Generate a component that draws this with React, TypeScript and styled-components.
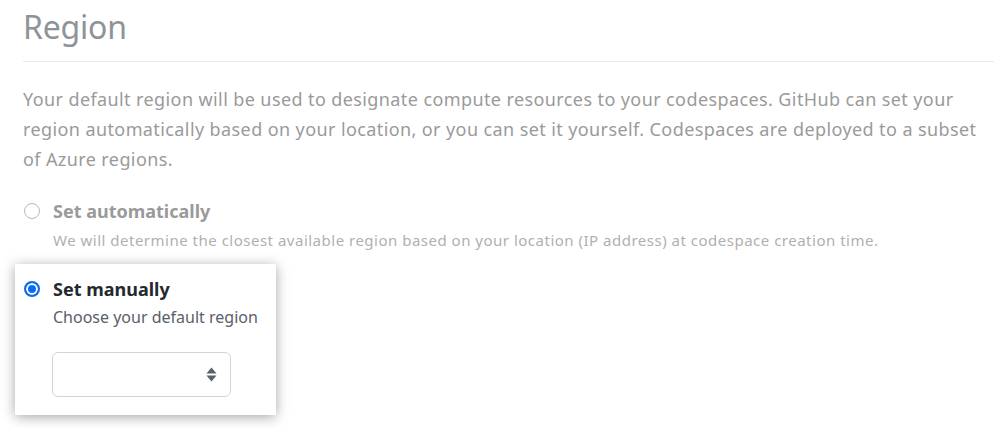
import React from "react";
import styled, { createGlobalStyle } from "styled-components";

const Global = createGlobalStyle`
  html, body { margin: 0; padding: 0; background: #fff; }
  body { font-family: "Noto Sans", "Open Sans", sans-serif; min-height: 428px; }
`;

const Page = styled.div`
  padding: 0 5px 0 23px;
  width: 971px;
`;

const Heading = styled.h2`
  margin: 0;
  padding-top: 3px;
  font-size: 32px;
  font-weight: 400;
  line-height: 48px;
  color: #8e9399;
  border-bottom: 1px solid #eaeaea;
  padding-bottom: 10px;
  letter-spacing: -0.2px;
`;

const Para = styled.p`
  margin: 22px 0 0;
  font-size: 18px;
  line-height: 30px;
  color: #9a9a9a;
  letter-spacing: 0.4px;
`;

const Options = styled.div`
  margin-top: 25px;
  display: flex;
  flex-direction: column;
`;

const Option = styled.div<{ $highlight?: boolean }>`
  display: grid;
  grid-template-columns: 30px auto;
  align-items: start;
  ${(p) =>
    p.$highlight
      ? `
    margin: 11px 0 0 -8px;
    width: 245px;
    padding: 13px 8px 18px 8px;
    background: #fff;
    box-shadow: 0 2px 12px rgba(0,0,0,0.35);
  `
      : ""}
`;

const Radio = styled.span<{ $checked?: boolean }>`
  width: 16px;
  height: 16px;
  box-sizing: border-box;
  border-radius: 50%;
  margin-top: 4px;
  margin-left: 1px;
  ${(p) =>
    p.$checked
      ? `
    border: 2px solid #0a6cf0;
    background: #0a6cf0;
    box-shadow: inset 0 0 0 2px #fff;
  `
      : `
    border: 1px solid #b8b8b8;
    background: #fff;
  `}
`;

const Body = styled.div`
  display: flex;
  flex-direction: column;
`;

const Label = styled.div<{ $active?: boolean }>`
  font-size: 18px;
  font-weight: 700;
  line-height: 25px;
  color: ${(p) => (p.$active ? "#24292e" : "#9a9a9a")};
`;

const Note = styled.div<{ $active?: boolean }>`
  font-size: ${(p) => (p.$active ? "16px" : "15px")};
  letter-spacing: ${(p) => (p.$active ? "0" : "0.5px")};
  line-height: 26px;
  color: ${(p) => (p.$active ? "#586069" : "#b0b0b0")};
  margin-top: ${(p) => (p.$active ? "2px" : "3px")};
`;

const Select = styled.div`
  margin: 22px 0 0 -1px;
  width: 179px;
  height: 45px;
  box-sizing: border-box;
  border: 1px solid #d1d5da;
  border-radius: 6px;
  display: flex;
  align-items: center;
  justify-content: flex-end;
  padding-right: 13px;
`;

const Arrows = () => (
  <svg width="11" height="15" viewBox="0 0 11 15">
    <path d="M5.5 0.5 L10.5 6.5 H0.5 Z" fill="#586069" />
    <path d="M5.5 14.5 L10.5 8.5 H0.5 Z" fill="#586069" />
  </svg>
);

export default function App() {
  return (
    <>
      <Global />
      <Page>
        <Heading>Region</Heading>
        <Para>
          Your default region will be used to designate compute resources to your codespaces. GitHub can set your
          region automatically based on your location, or you can set it yourself. Codespaces are deployed to a subset
          of Azure regions.
        </Para>
        <Options>
          <Option>
            <Radio />
            <Body>
              <Label>Set automatically</Label>
              <Note>
                We will determine the closest available region based on your location (IP address) at codespace creation
                time.
              </Note>
            </Body>
          </Option>
          <Option $highlight>
            <Radio $checked />
            <Body>
              <Label $active>Set manually</Label>
              <Note $active>Choose your default region</Note>
              <Select>
                <Arrows />
              </Select>
            </Body>
          </Option>
        </Options>
      </Page>
    </>
  );
}
